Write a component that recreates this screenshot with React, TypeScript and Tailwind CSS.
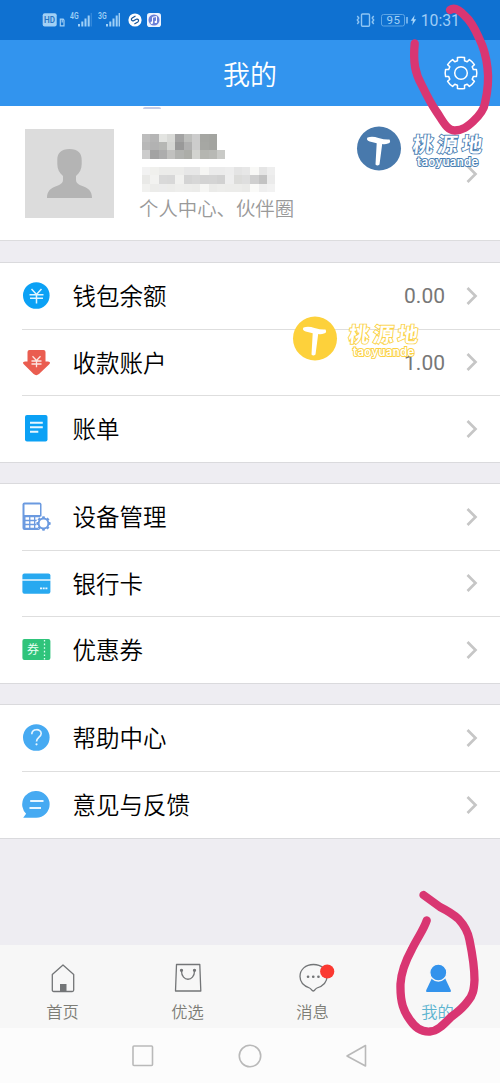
import type { ReactNode } from "react";

function gearPath(cx: number, cy: number, outer: number, inner: number, half: number) {
  const at = (r: number, deg: number) => {
    const a = (deg * Math.PI) / 180;
    return `${(cx + r * Math.cos(a)).toFixed(2)} ${(cy + r * Math.sin(a)).toFixed(2)}`;
  };
  let d = "";
  for (let i = 0; i < 8; i++) {
    const c = i * 45;
    d += `${i ? "L" : "M"}${at(inner, c - half - 2)}L${at(outer, c - half + 1)}A${outer} ${outer} 0 0 1 ${at(outer, c + half - 1)}L${at(inner, c + half + 2)}A${inner} ${inner} 0 0 1 ${at(inner, c + 43 - half)}`;
  }
  return d + "Z";
}

function Signal({ label }: { label: string }) {
  return (
    <svg width="24" height="16" viewBox="0 0 24 16" fill="#9fd0f7">
      <text x="0" y="7.2" fontSize="8.3" fontWeight="600" fontFamily="Roboto, sans-serif" textLength="8.6" lengthAdjust="spacingAndGlyphs">{label}</text>
      <rect x="8" y="12" width="2" height="2.5" />
      <rect x="11.3" y="9.5" width="2" height="5" />
      <rect x="14.5" y="6.5" width="2" height="8" />
      <rect x="17.7" y="3.5" width="2" height="11" />
      <rect x="20.6" y="1" width="1.4" height="13.5" opacity={label === "3G" ? 1 : 0.25} />
    </svg>
  );
}

function StatusBar() {
  return (
    <div className="flex h-10 shrink-0 items-center bg-[#0f71d1] pr-10 pl-[42px] text-[#9fcdf6]">
      <svg width="24" height="16" viewBox="0 0 24 16" className="mr-[4px]">
        <rect x="0.7" y="1.2" width="14" height="13.3" rx="2" fill="#a2d0f5" />
        <text x="2.1" y="11" fontSize="8.8" fontWeight="600" fontFamily="Roboto, sans-serif" fill="#2776c4" textLength="11" lengthAdjust="spacingAndGlyphs">HD</text>
        <path d="M18.300 7.200h2.900l.8 1v5.600h-3.700zM20.200 7.500v3" fill="none" stroke="#a2d0f5" strokeWidth="1.200" />
      </svg>
      <Signal label="4G" />
      <div className="w-1" />
      <Signal label="3G" />
      <svg width="14" height="14" viewBox="0 0 14 14" className="ml-[6px]">
        <circle cx="7" cy="7" r="6.6" fill="#fff" />
        <path d="M7.500 3 4.200 5c-1.700 1.200-.6 3.500 1.300 2.700l3.200-1.700M6.400 11l3.400-2c1.700-1.200.4-3.500-1.500-2.700L5.200 8" fill="none" stroke="#14559b" strokeWidth="1.200" />
      </svg>
      <svg width="14" height="14" viewBox="0 0 14 14" className="ml-[5px]">
        <rect width="14" height="14" rx="2.800" fill="#eef4ff" />
        <circle cx="7" cy="7" r="5.500" fill="#6a7fd8" />
        <path d="M5.500 9.600V4.300l4-.8v5.300" fill="none" stroke="#fff" />
        <circle cx="4.800" cy="9.700" r="1.200" fill="#fff" />
        <circle cx="8.800" cy="8.900" r="1.200" fill="#fff" />
      </svg>
      <svg width="62" height="16" viewBox="0 0 62 16" className="ml-auto" fill="none" stroke="#8fc5f3">
        <rect x="5.500" y="2" width="8" height="12.200" rx="1" strokeWidth="1.400" />
        <path d="m1.300 4 1.500 2-1.500 2 1.500 2-1.500 2M17.700 4l-1.500 2 1.500 2-1.500 2 1.500 2" strokeWidth="1.400" />
        <rect x="25.500" y="2.500" width="23" height="11.500" rx="2" stroke="#5fa6e6" />
        <path d="M51 5v6.500" strokeWidth="1.500" />
        <path d="m58.700 3-4 5.800h2.200l-.7 4.400 4-5.900h-2.300z" fill="#a8d6fa" stroke="none" />
        <text x="30.500" y="12.200" fontSize="11.500" fontFamily="Roboto, sans-serif" fill="#a2d0f5" stroke="none" textLength="13.500">95</text>
      </svg>
      <span className="mt-[2px] ml-[3px] font-[Roboto,sans-serif] text-[15.800px] leading-none">10:31</span>
    </div>
  );
}

function Chevron() {
  return (
    <svg width="12" height="20" viewBox="0 0 12 20" className="shrink-0">
      <path d="m1.500 2 8 8-8 8" fill="none" stroke="#c6c6c6" strokeWidth="2.700" />
    </svg>
  );
}

const NAME = [
  ["#bdbdbd", "#b5b5b5", "#e3e4e1", "#d9dad7", "#a3a3a3", "#bdbebc", "#cccccc", "#a5a6a2", "#a3a4a0", "#fff"],
  ["#b8b8b8", "#b2b2b2", "#b6b7b4", "#d5d6d3", "#999999", "#b0b0b0", "#cccccc", "#a6a7a3", "#a3a4a0", "#fff"],
  ["#cccccc", "#a3a3a3", "#adadad", "#c1c1bf", "#b1b2af", "#acada8", "#d2d3cf", "#b5b6b1", "#b8b9b5", "#c9cac7"],
];
const ACCOUNT = [
  ["#f2f2f2", "#f0f0ed", "#ececea", "#ececea", "#ececea", "#e7e7e7", "#e7e7e7", "#f5f5f3", "#ebebeb", "#ebebeb", "#ededed", "#e4e4e4", "#e7e7e7", "#f8f8f6", "#e5e5e5", "#eeeeee"],
  ["#e9e9e7", "#f2f2f0", "#d9d9d9", "#d8d8d8", "#f1f1ef", "#d4d4d4", "#d7d7d7", "#d3d3d3", "#d4d4d4", "#d1d1d1", "#eeeeee", "#dcdcda", "#dedede", "#cfcfcf", "#c3c3c3", "#ebebeb"],
  ["#f1f1ef", "#ececea", "#ececec", "#ececea", "#eeeeec", "#ededeb", "#ececea", "#f6f6f4", "#ebebe9", "#ededeb", "#ececea", "#ececea", "#eaeae8", "#fafaf8", "#efefef", "#f2f2f2"],
];

function Mosaic({ rows }: { rows: string[][] }) {
  return (
    <div className="flex flex-col">
      {rows.map((row, r) => (
        <div key={r} className="flex h-[8.4px]">
          {row.map((color, c) => (
            <div key={c} className="w-[8.33px]" style={{ backgroundColor: color }} />
          ))}
        </div>
      ))}
    </div>
  );
}

function Profile() {
  return (
    <section className="relative flex h-[135px] shrink-0 border-b border-[#dcdcde] bg-white pt-[23px] pr-[22px] pl-[25px]">
      <div className="absolute top-[1px] left-[143px] h-[2px] w-[18px] rounded-t-full bg-[#c3cbe6]" />
      <svg width="89" height="89" viewBox="0 0 89 89" className="shrink-0">
        <rect width="89" height="89" fill="#dcdcdc" />
        <path d="M44.500 20c-8.500 0-12.200 4-12.200 11v4c0 5 2 9 5.700 12v3.500c0 3.500-2 4.500-5 6C25.500 59 22 62 22 69h45c0-7-3.500-10-11-12.500-3-1.500-5-2.500-5-6V47c3.700-3 5.700-7 5.700-12v-4c0-7-3.700-11-12.200-11z" fill="#b4b4b4" />
      </svg>
      <div className="ml-[28px] flex flex-col pt-[4.5px]">
        <Mosaic rows={NAME} />
        <div className="h-[8.3px]" />
        <Mosaic rows={ACCOUNT} />
        <span className="mt-[2px] -ml-[3px] text-[19.4px] leading-[28px] font-[350] text-[#999]">个人中心、伙伴圈</span>
      </div>
      <div className="mt-[35px] ml-auto">
        <Chevron />
      </div>
    </section>
  );
}

function Row({ icon, label, value, last }: { icon: ReactNode; label: string; value?: string; last?: boolean }) {
  return (
    <div className={`flex items-center pl-[22px] ${last ? "h-[66px]" : "h-[66.5px]"}`}>
      <svg width="29" height="29" viewBox="0 0 29 29" className="-mt-px shrink-0">{icon}</svg>
      <div className={`ml-[-29px] flex h-full flex-1 items-center pr-[22px] pl-[50.5px] ${last ? "" : "border-b border-[#dedede]"}`}>
        <span className="text-[23.5px] leading-none font-[350] text-black">{label}</span>
        {value && <span className="mt-[2px] ml-auto font-[Roboto,sans-serif] text-[21px] leading-none text-[#777]">{value}</span>}
        <div className={value ? "ml-[21px]" : "ml-auto"}>
          <Chevron />
        </div>
      </div>
    </div>
  );
}

const yen = "M9.500 8l5 5.500 5-5.500M7.500 13.800h14M8 17.300h13M14.500 13.500v9";
const walletIcon = (
  <>
    <circle cx="14.300" cy="14.500" r="13.300" fill="#0ba1f5" />
    <path d={yen} fill="none" stroke="#e1f5ff" strokeWidth="1.500" />
  </>
);
const receiveIcon = (
  <>
    <path d="M7.500 2h14q2 0 2 2v9.500h2.500q3.500.7 1 3L17 26q-2.700 2.300-5.400 0L2 16.500q-2.500-2.300 1-3h2.500V4q0-2 2-2z" fill="#ea5d50" />
    <path d="m10.500 8.300 4 4.200 4-4.200M9.500 13h10M9.500 16h10M14.500 12.500v6.800" fill="none" stroke="#fde6e2" strokeWidth="1.300" />
  </>
);
const billIcon = (
  <>
    <rect x="3" y="1" width="22.500" height="26.500" rx="2" fill="#0ba1f5" />
    <path d="M8 8.700h12.800M8 13.200h12.800M8 17.700h8.300" stroke="#e6f6ff" strokeWidth="2" />
  </>
);
const deviceIcon = (
  <>
    <rect x="0.500" y="0.500" width="19" height="27.500" rx="2" fill="#6b9ae0" />
    <rect x="2.500" y="2.500" width="15.500" height="10.500" fill="#fff" />
    <path d="M3.500 16.500h14M3.500 20.500h14M3.500 24.500h14" stroke="#fff" strokeWidth="2.700" strokeDasharray="3.600 1.300" />
    <circle cx="21.500" cy="21.500" r="7.500" fill="#fff" />
    <path d={gearPath(21.5, 21.5, 7.2, 5.8, 12)} fill="#6b9ae0" />
    <circle cx="21.500" cy="21.500" r="3.900" fill="#fff" />
  </>
);
const cardIcon = (
  <>
    <rect x="0.400" y="4.500" width="28" height="20.300" rx="2" fill="#28a9f0" />
    <path d="M0 11h29" stroke="#e9f7ff" strokeWidth="1.500" />
    <path d="M18 19.300h7.500" stroke="#e9f7ff" strokeWidth="1.700" strokeDasharray="2 .7" />
  </>
);
const couponIcon = (
  <>
    <rect x="0.400" y="4" width="28" height="21" rx="2" fill="#2fc47b" />
    <path d="M22.500 5v20" stroke="#dcfff0" strokeWidth="1.300" strokeDasharray="1.600 2" />
    <text x="5" y="18.700" fontSize="12" fill="#e7fff3">券</text>
  </>
);
const helpIcon = (
  <>
    <circle cx="14.300" cy="14.500" r="13.300" fill="#46aaf2" />
    <path d="M9.800 11.300c0-6.300 9.400-5.800 9.400-.7 0 3.600-4.700 3.600-4.700 8" fill="none" stroke="#e8f6ff" strokeWidth="1.600" />
    <circle cx="14.500" cy="21.300" r="1.100" fill="#e8f6ff" />
  </>
);
const feedbackIcon = (
  <>
    <path d="M14.300 1a13.300 13.300 0 1 1 0 26.700H1.200l2.900-4A13.300 13.300 0 0 1 14.300 1z" fill="#46aaf2" />
    <path d="M8.200 11h13.300M7.500 18h11.500" stroke="#e8f6ff" strokeWidth="2.200" />
  </>
);

function Group({ children }: { children: ReactNode }) {
  return <section className="mt-[21px] shrink-0 border-y border-[#dadadd] bg-white">{children}</section>;
}

function Tab({ label, active, children }: { label: string; active?: boolean; children: ReactNode }) {
  return (
    <div className="flex flex-1 flex-col items-center pt-[16px]">
      <svg width="36" height="36" viewBox="0 0 36 36" className="overflow-visible" fill="none" stroke="#737577" strokeWidth="1.300" strokeLinejoin="round">{children}</svg>
      <span className={`mt-[2px] text-[16.300px] leading-[24px] font-[350] ${active ? "text-[#5cb4d0]" : "text-[#7d7d76]"}`}>{label}</span>
    </div>
  );
}

function Watermark({ tone }: { tone: "blue" | "yellow" }) {
  const blue = tone === "blue";
  return (
    <div className={`pointer-events-none absolute flex ${blue ? "top-[126px] left-[356px]" : "top-[316px] left-[292px]"}`}>
      <svg width="46" height="46" viewBox="0 0 46 46">
        <circle cx="23" cy="22.500" r="22" fill={blue ? "#4879ac" : "#fdd13b"} />
        <path d="M11.500 11.500q5-1.500 11 .5 7 2 11 1.500 1.800 3-1.500 4-3 1-5.800.4l-2.700 20.600q-2.200 1.800-4 0l1.200-21.300-7-1.700q-4-1.500-2.200-4z" fill="#fff" />
      </svg>
      <div className={`ml-[9px] flex flex-col text-white [paint-order:stroke_fill] ${blue ? "[-webkit-text-stroke:1.8px_#4b7fb3]" : "[-webkit-text-stroke:1.8px_#fbd143]"}`}>
        <span className="mt-[5px] ml-[2px] -skew-x-6 text-[20.500px] leading-[24px] font-bold tracking-[4px]">桃源地</span>
        <span className="ml-[6px] font-[Inter,sans-serif] text-[11.500px] leading-[14px] font-semibold tracking-[0.300px]">taoyuande</span>
      </div>
    </div>
  );
}

export default function App() {
  return (
    <div className="relative flex h-[1083px] w-[500px] flex-col overflow-hidden bg-[#eeedf2] font-['Noto_Sans_CJK_SC',sans-serif]">
      <StatusBar />
      <header className="grid h-[66px] shrink-0 grid-cols-3 items-center bg-[#3294ee]">
        <h1 className="col-start-2 text-center text-[27px] leading-none font-[350] text-white">我的</h1>
        <svg width="36" height="36" viewBox="0 0 36 36" className="mr-[21px] justify-self-end" fill="none" stroke="#fff" strokeWidth="1.500" strokeLinejoin="round">
          <path d={gearPath(18, 18, 15.8, 12.8, 14)} />
          <circle cx="18" cy="18" r="6.300" />
        </svg>
      </header>
      <Profile />
      <Group>
        <Row icon={walletIcon} label="钱包余额" value="0.00" />
        <Row icon={receiveIcon} label="收款账户" value="1.00" />
        <Row icon={billIcon} label="账单" last />
      </Group>
      <div className="-mt-px" />
      <Group>
        <Row icon={deviceIcon} label="设备管理" />
        <Row icon={cardIcon} label="银行卡" />
        <Row icon={couponIcon} label="优惠券" last />
      </Group>
      <div className="-mt-px" />
      <Group>
        <Row icon={helpIcon} label="帮助中心" />
        <Row icon={feedbackIcon} label="意见与反馈" last />
      </Group>
      <nav className="mt-auto flex h-[83px] shrink-0 bg-[#f7f7f7]">
        <Tab label="首页">
          <path d="M18 4 28.700 13.500V29q0 1.500-1.500 1.500H8.800q-1.500 0-1.500-1.500V13.500z" />
          <path d="M15 23h6.500v7.500H15z" fill="#737577" stroke="none" />
        </Tab>
        <Tab label="优选">
          <path d="M6.500 3.500h23.300l1 26.500H5.500zM11.500 10c0 11 13 11 13 0" />
          <circle cx="11.500" cy="9.300" r="1" fill="#737577" />
          <circle cx="24.500" cy="9.300" r="1" fill="#737577" />
        </Tab>
        <Tab label="消息">
          <path d="M18.500 3.500c-8 0-13.500 5-13.500 12 0 7 5.300 10 9.500 11.500 2 .7 2 3 3.800 3 1.700 0 1.700-2.300 3.700-3 4.500-1.500 10-4.500 10-11.500 0-7-5.500-12-13.500-12z" />
          <path d="M13 15.800h.1m5.100 0h.1m5.100 0h.1" strokeWidth="2.600" strokeLinecap="round" />
          <circle cx="32.200" cy="10.500" r="7.100" fill="#fb3931" stroke="none" />
        </Tab>
        <Tab label="我的" active>
          <path d="M12 17h13l5.700 12q.8 2-1.200 2H7.500q-2 0-1.200-2z" fill="#3393ec" stroke="none" />
          <circle cx="18.300" cy="11.500" r="8.500" fill="#3393ec" stroke="#f7f7f7" />
        </Tab>
      </nav>
      <div className="flex h-[55px] shrink-0 items-center justify-center gap-[83px] bg-[#fcfcfc]">
        <svg width="24" height="24" viewBox="0 0 24 24" fill="none" stroke="#b9b9b9" strokeWidth="1.600">
          <rect x="2" y="2" width="19.500" height="19.500" rx="1" />
        </svg>
        <svg width="24" height="24" viewBox="0 0 24 24" fill="none" stroke="#b9b9b9" strokeWidth="1.600">
          <circle cx="12" cy="12" r="10.700" />
        </svg>
        <svg width="24" height="24" viewBox="0 0 24 24" fill="none" stroke="#b9b9b9" strokeWidth="1.600" strokeLinejoin="round">
          <path d="M20.500 1.500v20.500L2 12z" />
        </svg>
      </div>
      <Watermark tone="blue" />
      <Watermark tone="yellow" />
      <svg width="500" height="1083" viewBox="0 0 500 1083" className="pointer-events-none absolute inset-0" fill="none" stroke="#d93672" strokeWidth="8.300" strokeLinecap="round" strokeLinejoin="round">
        <path d="M414.700 43.500C413 62 415 73 421.700 85C427 96 431 104 436.700 112C443 121 447 131 455 130.500C463 130 467 127 473 121.500C480 115 484 110 485 103C488 90 489 80 487.500 68C486 54 483 46 479 38C475 29 471 21 465 16Q456 6 450 10" />
        <path d="M423.500 895L440 907C448 911 453 914 458.500 919C465 926 468 932 469.500 940C473 957 474.500 966 474.500 980C474 990 473 995 468 1001C463 1008 458 1012 451 1017C444 1024 438 1031 430 1031.500C420 1032 415 1027 410 1020C404 1012 400 1003 400.500 984C401 974 406 960 412 949C418 937 424 929 426.700 920.500" />
      </svg>
    </div>
  );
}
